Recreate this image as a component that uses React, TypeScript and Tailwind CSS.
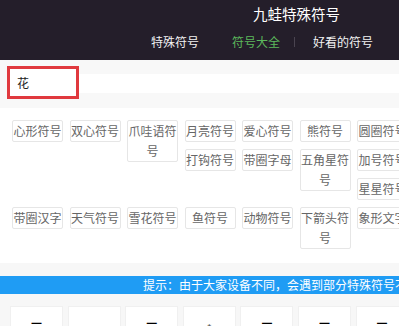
const tags = [
  "心形符号",
  "双心符号",
  "爪哇语符号",
  "月亮符号",
  "爱心符号",
  "熊符号",
  "圆圈符号",
  "打钩符号",
  "带圈字母",
  "五角星符号",
  "加号符号",
  "星星符号",
  "带圈汉字",
  "天气符号",
  "雪花符号",
  "鱼符号",
  "动物符号",
  "下箭头符号",
  "象形文字",
];

const cards = ["▔", "", "▔", "⁂", "▔", "▔", "▔"];

export default function App() {
  return (
    <div
      className="w-[399px] h-[326px] overflow-hidden bg-[#f8f8f8]"
      style={{ fontFamily: '"Noto Sans CJK SC", "Noto Sans", sans-serif' }}
    >
      <div className="w-[420px]">
        <header className="h-[60px] bg-[#241e2a]">
          <div className="pt-[4px] pl-[253px] text-[14.5px] leading-[20px] text-white">
            九蛙特殊符号
          </div>
          <nav className="flex items-center pl-[151px] mt-[10px] text-[12px] leading-[16px]">
            <span className="text-[#f2f2f2]">特殊符号</span>
            <span className="ml-[33px] text-[#5cb85c]">符号大全</span>
            <span className="ml-[14px] w-px h-[10px] bg-[#4a4450]"></span>
            <span className="ml-[18px] text-[#f2f2f2]">好看的符号</span>
          </nav>
        </header>

        <section className="relative h-[48px] bg-[#f8f8f8] pt-[14px]">
          <div className="ml-[10px] h-[19px] bg-white"></div>
          <div className="absolute left-[7px] top-[6px] w-[72px] h-[33px] border-[3px] border-[#e0393e] bg-white flex items-center pl-[7px] text-[12px] text-[#222]">
            花
          </div>
        </section>

        <section className="flow-root bg-white pt-[12px] pb-[7px] pl-[5.5px]">
          {tags.map((t) => (
            <div
              key={t}
              className="float-left ml-[6.5px] mb-[7px] w-[51px] border border-[#e6e6e6] rounded-[2px] bg-white text-center text-[12px] leading-[20px] text-[#666]"
            >
              {t}
            </div>
          ))}
        </section>

        <section className="bg-[#f7f7f7] pt-[13px]">
          <div className="h-[18px] bg-[#1f9cf4] overflow-hidden whitespace-nowrap pl-[143px] text-[12px] leading-[18px] text-white">
            提示：由于大家设备不同，会遇到部分特殊符号不显示的情况
          </div>
          <div className="flex gap-[4.6px] pl-[10px] pt-[12px]">
            {cards.map((c, i) => (
              <div
                key={i}
                className="w-[53px] h-[60px] shrink-0 bg-white border border-[#f0f0f0] flex justify-center pt-[16px] text-[10px] leading-none text-black"
              >
                {c}
              </div>
            ))}
          </div>
        </section>
      </div>
    </div>
  );
}
